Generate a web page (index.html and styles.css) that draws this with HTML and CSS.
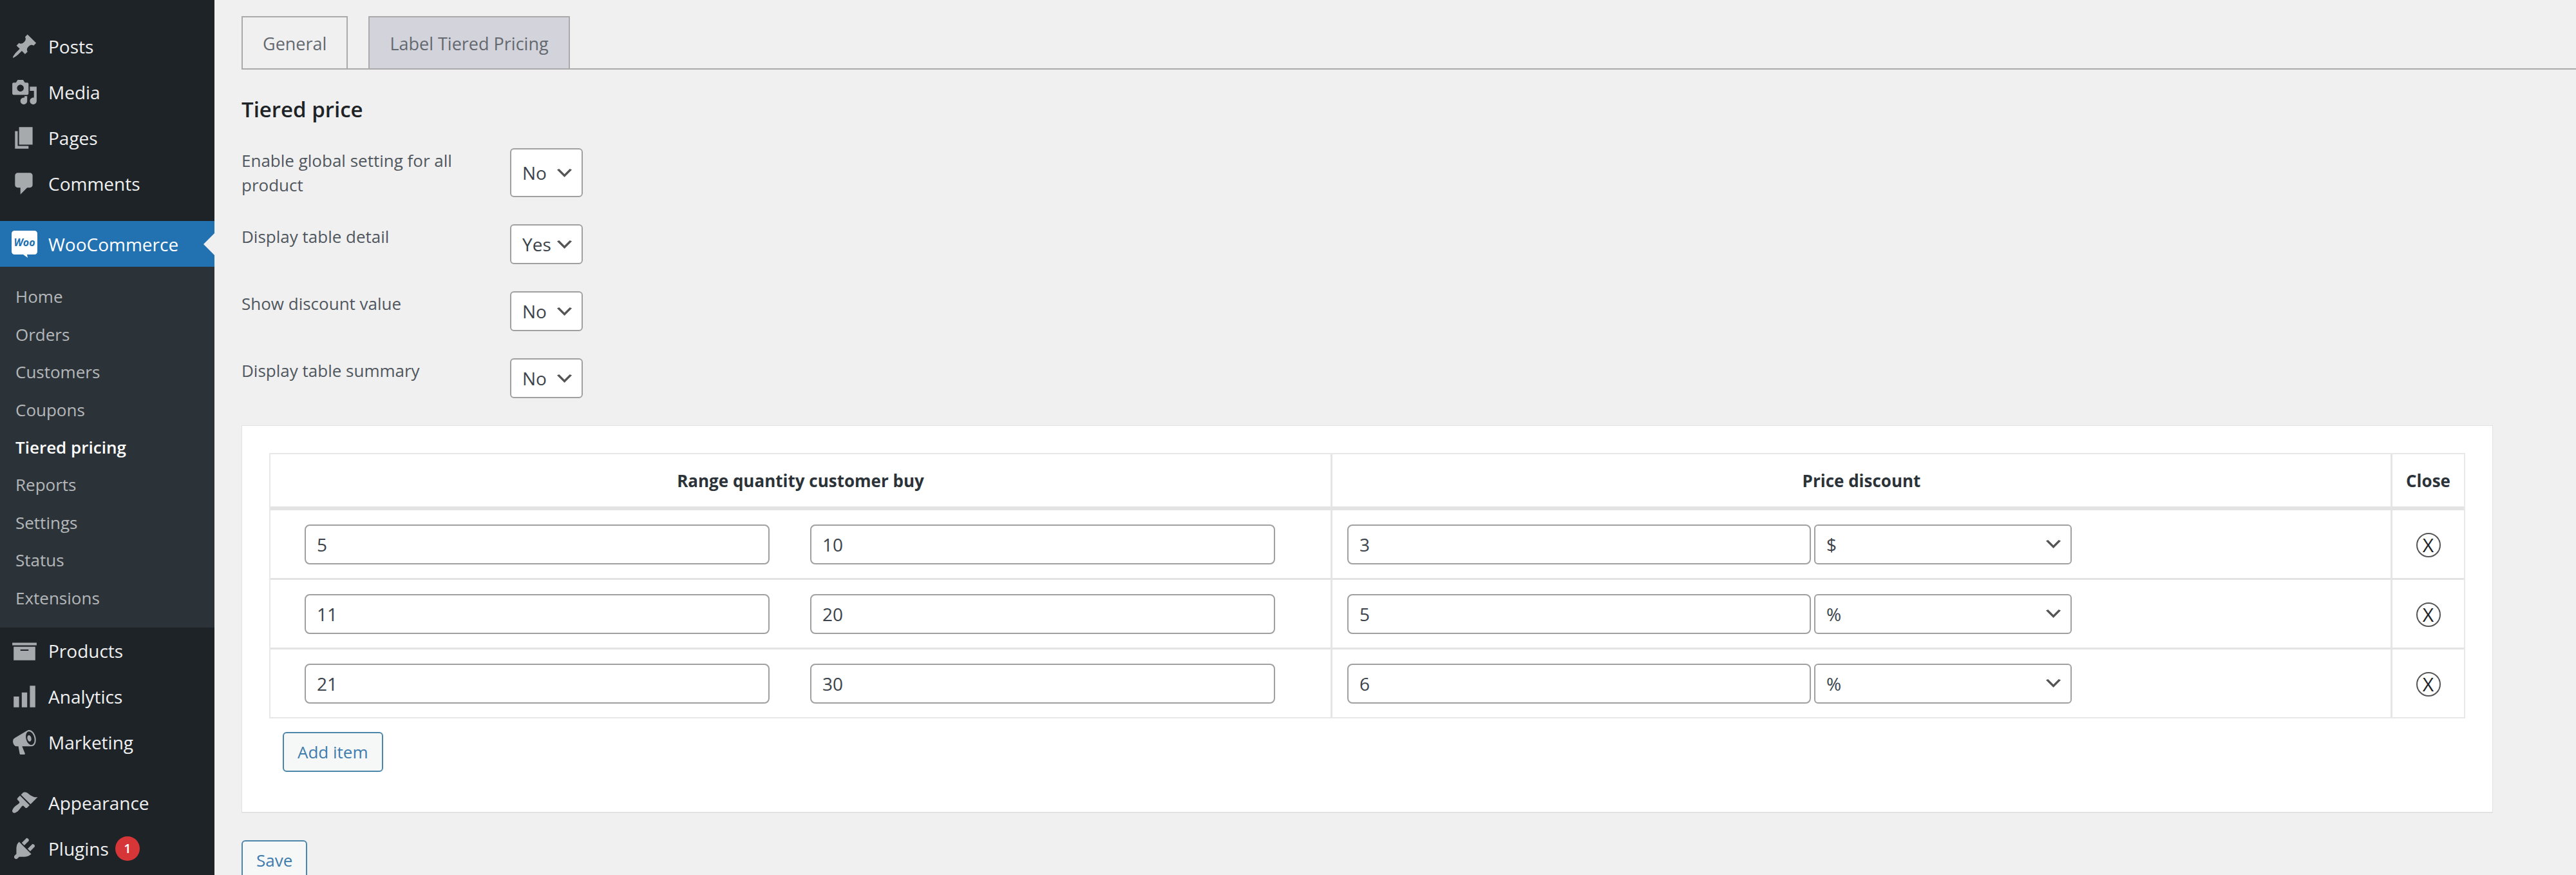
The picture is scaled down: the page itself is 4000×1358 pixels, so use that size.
FILE: index.html
```html
<!DOCTYPE html>
<html lang="en">
<head>
<meta charset="utf-8">
<meta name="viewport" content="width=device-width, initial-scale=1">
<title>Tiered pricing</title>
<link rel="stylesheet" href="styles.css">
</head>
<body>
<div class="shell">
  <nav class="sidebar" aria-label="Main menu">
    <ul class="menu">
      <li><a class="menu-item" href="#"><svg class="icon" viewBox="0 0 20 20" aria-hidden="true"><path d="M10.44 3.02l1.82-1.82 6.36 6.35-1.83 1.82c-1.05-.68-2.48-.57-3.41.36l-.75.75c-.92.93-1.04 2.35-.35 3.41l-1.83 1.82-2.41-2.41-2.8 2.79c-.42.42-3.38 2.71-3.8 2.29s1.86-3.39 2.28-3.81l2.79-2.79L4.1 9.36l1.83-1.82c1.05.69 2.48.57 3.4-.36l.75-.75c.93-.92 1.05-2.35.36-3.41z"/></svg>Posts</a></li>
      <li><a class="menu-item" href="#"><svg class="icon" viewBox="0 0 20 20" aria-hidden="true"><path d="M13 11V4c0-.55-.45-1-1-1h-1.67L9 1H5L3.67 3H2c-.55 0-1 .45-1 1v7c0 .55.45 1 1 1h10c.55 0 1-.45 1-1zM7 4.5c1.38 0 2.5 1.12 2.5 2.5S8.38 9.5 7 9.5 4.5 8.38 4.5 7 5.62 4.5 7 4.5zM14 6h5v10.5c0 1.38-1.12 2.5-2.5 2.5S14 17.88 14 16.5s1.12-2.5 2.5-2.5c.17 0 .34.02.5.05V9h-3V6zm-4 8.05V13h2v3.5c0 1.38-1.12 2.5-2.5 2.5S7 17.88 7 16.5 8.12 14 9.5 14c.17 0 .34.02.5.05z"/></svg>Media</a></li>
      <li><a class="menu-item" href="#"><svg class="icon" viewBox="0 0 20 20" aria-hidden="true"><path d="M6 15V2h10v13H6zm-1 1h8v2H3V5h2v11z"/></svg>Pages</a></li>
      <li><a class="menu-item" href="#"><svg class="icon" viewBox="0 0 20 20" aria-hidden="true"><path d="M5 2h9c1.1 0 2 .9 2 2v7c0 1.1-.9 2-2 2h-2l-5 5v-5H5c-1.1 0-2-.9-2-2V4c0-1.1.9-2 2-2z"/></svg>Comments</a></li>
      <li class="group">
        <a class="menu-item current" href="#"><svg class="icon" viewBox="0 0 42 42" aria-hidden="true"><path d="M6 0h30q5 0 5 5v27q0 5-5 5H25l1 5-7-5H6q-5 0-5-5V5q0-5 5-5z"/><text class="logo-text" x="21" y="24">Woo</text></svg>WooCommerce</a>
        <ul class="submenu">
          <li><a href="#">Home</a></li>
          <li><a href="#">Orders</a></li>
          <li><a href="#">Customers</a></li>
          <li><a href="#">Coupons</a></li>
          <li><a class="active" href="#" aria-current="page">Tiered pricing</a></li>
          <li><a href="#">Reports</a></li>
          <li><a href="#">Settings</a></li>
          <li><a href="#">Status</a></li>
          <li><a href="#">Extensions</a></li>
        </ul>
      </li>
      <li><a class="menu-item" href="#"><svg class="icon" viewBox="0 0 20 20" aria-hidden="true"><path d="M19 4v2H1V4h18zM2 7h16v10H2V7zm11 3V9H7v1h6z"/></svg>Products</a></li>
      <li><a class="menu-item" href="#"><svg class="icon" viewBox="0 0 20 20" aria-hidden="true"><path d="M18 18V2h-4v16h4zm-6 0V7H8v11h4zm-6 0v-8H2v8h4z"/></svg>Analytics</a></li>
      <li><a class="menu-item" href="#"><svg class="icon" viewBox="0 0 20 20" aria-hidden="true"><path d="M18.15 5.94c.46 1.62.38 3.22-.02 4.48-.42 1.28-1.26 2.18-2.3 2.48-.16.06-.26.06-.4.06-.06.02-.12.02-.18.02-.06.02-.14.02-.22.02h-6.8l2.22 5.5c.02.14-.06.26-.14.34-.08.1-.24.16-.34.16H6.95c-.1 0-.26-.06-.34-.16-.08-.08-.16-.2-.14-.34l-1-5.5H4.25l-.02-.02c-.5.06-1.08-.18-1.54-.62s-.88-1.08-1.06-1.88c-.24-.8-.2-1.56-.02-2.2.18-.62.58-1.08 1.06-1.3l.02-.02 9-5.4c.1-.06.18-.1.24-.16.06-.04.14-.08.24-.12.16-.08.28-.12.5-.18 1.04-.3 2.24.1 3.22.98s1.84 2.24 2.26 3.86zm-2.58 5.98h-.02c.4-.1.74-.34 1.04-.7.58-.7.86-1.76.86-3.04 0-.64-.1-1.3-.28-1.98-.34-1.36-1.02-2.5-1.78-3.24s-1.68-1.1-2.46-.88c-.82.22-1.4.96-1.7 2-.32 1.04-.28 2.36.06 3.72.38 1.36 1 2.5 1.8 3.24.78.74 1.62 1.1 2.48.88zm-2.54-7.08c.22-.04.42-.02.62.04.38.16.76.48 1.02 1s.42 1.2.42 1.78c0 .3-.04.56-.12.8-.18.48-.44.84-.86.94-.34.1-.8-.06-1.14-.4s-.64-.86-.78-1.5c-.18-.62-.12-1.24.02-1.72s.48-.84.82-.94z"/></svg>Marketing</a></li>
      <li class="group"><a class="menu-item" href="#"><svg class="icon" viewBox="0 0 20 20" aria-hidden="true"><path d="M14.48 11.06L7.41 3.99l1.5-1.5c.5-.56 2.3-.47 3.51.32 1.21.8 1.43 1.28 2.91 2.1 1.18.64 2.45 1.26 4.45.85zm-.71.71L6.7 4.7 4.93 6.47c-.39.39-.39 1.02 0 1.41l1.06 1.06c.39.39.39 1.03 0 1.42-.6.6-1.43 1.11-2.21 1.69-.35.26-.7.53-1.01.84C1.43 14.23.4 16.08 1.4 17.07c.99 1 2.84-.03 4.18-1.36.31-.31.58-.66.85-1.02.57-.78 1.08-1.61 1.69-2.21.39-.39 1.02-.39 1.41 0l1.06 1.06c.39.39 1.02.39 1.41 0z"/></svg>Appearance</a></li>
      <li><a class="menu-item" href="#"><svg class="icon" viewBox="0 0 20 20" aria-hidden="true"><path d="M13.11 4.36L9.87 7.6 8 5.73l3.24-3.24c.35-.34 1.05-.2 1.56.32.52.51.66 1.21.31 1.55zm-8 1.77l.91-1.12 9.01 9.01-1.19.84c-.71.71-2.63 1.16-3.82 1.16H6.14L4.9 17.26c-.59.59-1.54.59-2.12 0-.59-.58-.59-1.53 0-2.12l1.24-1.24v-3.88c0-1.13.4-3.19 1.09-3.89zm7.26 3.97l3.24-3.24c.34-.35 1.04-.21 1.55.31.52.51.66 1.21.31 1.55l-3.24 3.25z"/></svg>Plugins <span class="badge">1</span></a></li>
    </ul>
  </nav>

  <main class="content">
    <nav class="tabs" aria-label="Settings sections">
      <a class="tab" href="#">General</a>
      <a class="tab tab-shaded" href="#">Label Tiered Pricing</a>
    </nav>

    <form class="form">
      <h1 class="title">Tiered price</h1>

      <div class="settings">
        <label for="global">Enable global setting for all product</label>
        <select class="field select" id="global"><option>No</option><option>Yes</option></select>
        <label for="detail">Display table detail</label>
        <select class="field select" id="detail"><option>Yes</option><option>No</option></select>
        <label for="discount">Show discount value</label>
        <select class="field select" id="discount"><option>No</option><option>Yes</option></select>
        <label for="summary">Display table summary</label>
        <select class="field select" id="summary"><option>No</option><option>Yes</option></select>
      </div>

      <section class="card">
        <table class="tiers">
          <thead>
            <tr><th scope="col">Range quantity customer buy</th><th scope="col">Price discount</th><th class="close-col" scope="col">Close</th></tr>
          </thead>
          <tbody>
            <tr>
              <td><div class="range"><input class="field" type="text" value="5" aria-label="From quantity"><input class="field" type="text" value="10" aria-label="To quantity"></div></td>
              <td><div class="price"><input class="field" type="text" value="3" aria-label="Discount"><select class="field select" aria-label="Discount type"><option>$</option><option>%</option></select></div></td>
              <td><button class="remove" type="button" aria-label="Remove row">X</button></td>
            </tr>
            <tr>
              <td><div class="range"><input class="field" type="text" value="11" aria-label="From quantity"><input class="field" type="text" value="20" aria-label="To quantity"></div></td>
              <td><div class="price"><input class="field" type="text" value="5" aria-label="Discount"><select class="field select" aria-label="Discount type"><option>%</option><option>$</option></select></div></td>
              <td><button class="remove" type="button" aria-label="Remove row">X</button></td>
            </tr>
            <tr>
              <td><div class="range"><input class="field" type="text" value="21" aria-label="From quantity"><input class="field" type="text" value="30" aria-label="To quantity"></div></td>
              <td><div class="price"><input class="field" type="text" value="6" aria-label="Discount"><select class="field select" aria-label="Discount type"><option>%</option><option>$</option></select></div></td>
              <td><button class="remove" type="button" aria-label="Remove row">X</button></td>
            </tr>
          </tbody>
        </table>
        <button class="button add" type="button">Add item</button>
      </section>

      <button class="button" type="submit">Save</button>
    </form>
  </main>
</div>
</body>
</html>
```
FILE: styles.css
```css
* {
  box-sizing: border-box;
}

body {
  margin: 0;
  background: #f0f0f0;
  color: #50575e;
  font-family: "Open Sans", "Noto Sans", sans-serif;
  font-size: 26px;
  line-height: 38px;
}

ul {
  list-style: none;
  margin: 0;
  padding: 0;
}

a {
  color: inherit;
  text-decoration: none;
}

.shell {
  display: flex;
  height: 100vh;
  overflow: hidden;
}

/* Sidebar */
.sidebar {
  flex: none;
  width: 333px;
  padding-top: 36px;
  background: #1d2327;
}

.menu-item {
  display: flex;
  align-items: center;
  height: 71px;
  padding-left: 17px;
  color: #f0f0f1;
  font-size: 28px;
}

.icon {
  flex: none;
  width: 42px;
  height: 42px;
  margin-right: 16px;
  fill: #a7aaad;
}

.group {
  margin-top: 23px;
}

.current {
  position: relative;
  background: #2271b1;
  color: #fff;
}

.current .icon {
  fill: #fff;
}

.icon .logo-text {
  fill: #2271b1;
  font-size: 16px;
  font-style: italic;
  font-weight: 700;
  text-anchor: middle;
}

.current::after {
  content: "";
  position: absolute;
  top: 19px;
  right: 0;
  border: 17px solid transparent;
  border-left: 0;
  border-right-color: #f0f0f0;
}

.submenu {
  display: grid;
  grid-auto-rows: 1fr;
  height: 560px;
  padding: 17px 0;
  background: #2c3338;
  color: #b4b7ba;
}

.submenu a {
  display: flex;
  align-items: center;
  height: 100%;
  padding-left: 24px;
}

.submenu .active {
  color: #fff;
  font-weight: 600;
}

.badge {
  display: grid;
  place-items: center;
  width: 38px;
  height: 38px;
  margin-left: 10px;
  border-radius: 50%;
  background: #d63638;
  color: #fff;
  font-size: 20px;
  font-weight: 600;
}

/* Page content */
.content {
  flex: 1;
  min-width: 0;
  padding: 25px 0 0 42px;
}

.tabs {
  display: flex;
  gap: 32px;
  border-bottom: 2px solid #aaa;
}

.tab {
  padding: 22px 31px 19px;
  border: 2px solid #aaa;
  border-bottom: 0;
  color: #646970;
  font-size: 27px;
}

.tab-shaded {
  background: #d3d3db;
}

.form {
  margin-right: 129px;
}

.title {
  margin: 39px 0 37px;
  color: #1d2327;
  font-size: 33px;
  font-weight: 600;
  line-height: 46px;
}

.settings {
  display: grid;
  grid-template-columns: 417px 113px;
  gap: 42px 0;
}

.settings label {
  padding-right: 77px;
}

.field {
  min-width: 0;
  min-height: 62px;
  margin: 0;
  padding: 0 17px;
  border: 2px solid #a0a0a0;
  border-radius: 8px;
  background-color: #fff;
  color: #3c434a;
  font-family: inherit;
  font-size: 28px;
}

.select {
  appearance: none;
  padding-right: 40px;
  border-radius: 6px;
  background-image: url("data:image/svg+xml,%3Csvg xmlns='http://www.w3.org/2000/svg' viewBox='0 0 20 20'%3E%3Cpath fill='%23555' d='M5 6l5 5 5-5 2 1-7 7-7-7 2-1z'/%3E%3C/svg%3E");
  background-position: right 10px center;
  background-repeat: no-repeat;
  background-size: 33px 33px;
}

.card {
  margin: 42px 0;
  padding: 42px 42px 62px;
  border: 1px solid #e2e2e2;
  border-bottom-width: 2px;
  background: #fff;
}

/* Price tiers */
.tiers {
  width: 100%;
  table-layout: fixed;
  border: 2px solid #e8e8e8;
  border-spacing: 0;
}

.tiers th {
  height: 84px;
  padding: 0;
  border-bottom: 3px solid #e3e3e3;
  color: #2c3338;
  font-weight: 700;
}

.tiers td {
  height: 108px;
  padding: 0;
  border-top: 3px solid #e3e3e3;
  text-align: center;
}

.tiers th + th,
.tiers td + td {
  border-left: 3px solid #e5e5e5;
}

.tiers .close-col {
  width: 114px;
}

.range,
.price {
  display: flex;
}

.range {
  gap: 63px;
  padding: 0 86px 0 53px;
}

.range .field {
  flex: 1;
}

.price {
  gap: 5px;
  padding: 0 20px 0 23px;
}

.price .field {
  width: 45%;
}

.price .select {
  width: 25%;
}

.remove {
  display: inline-grid;
  place-items: center;
  width: 38px;
  height: 38px;
  padding: 0;
  border: 2px solid #555;
  border-radius: 50%;
  background: none;
  color: #1d2327;
  font-family: inherit;
  font-size: 30px;
  line-height: 30px;
  vertical-align: middle;
}

.button {
  height: 62px;
  padding: 0 21px;
  border: 2px solid #4c86ab;
  border-radius: 6px;
  background: #f6f7f7;
  color: #3f7cae;
  font-family: inherit;
  font-size: 26px;
}

.add {
  display: block;
  margin: 21px 0 0 21px;
}
```
